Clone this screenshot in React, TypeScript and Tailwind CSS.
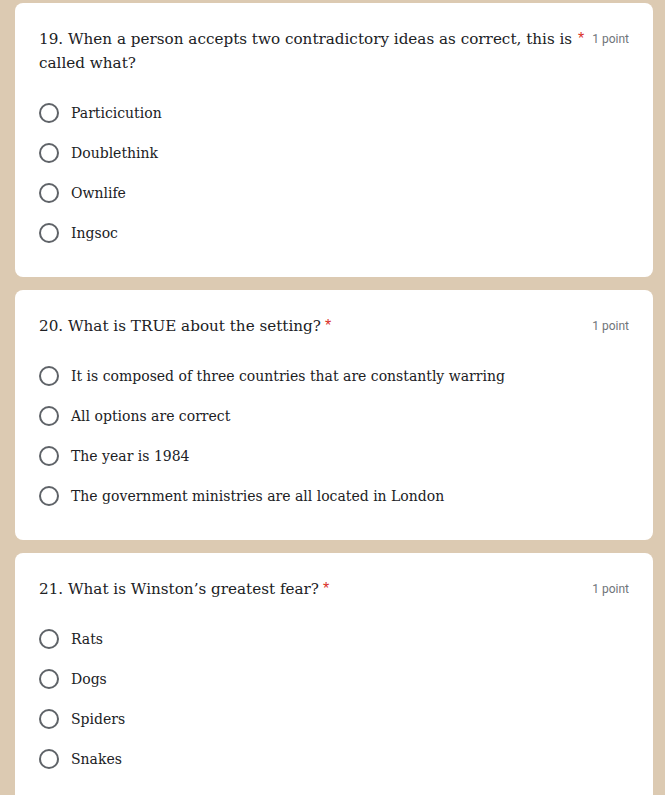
import React from 'react';

interface Question {
  title: string;
  options: string[];
}

const questions: Question[] = [
  {
    title: '19. When a person accepts two contradictory ideas as correct, this is called what?',
    options: ['Particicution', 'Doublethink', 'Ownlife', 'Ingsoc'],
  },
  {
    title: '20. What is TRUE about the setting?',
    options: [
      'It is composed of three countries that are constantly warring',
      'All options are correct',
      'The year is 1984',
      'The government ministries are all located in London',
    ],
  },
  {
    title: '21. What is Winston\u2019s greatest fear?',
    options: ['Rats', 'Dogs', 'Spiders', 'Snakes'],
  },
];

const serif = "font-['DejaVu_Serif',serif]";

const QuestionCard: React.FC<{ q: Question }> = ({ q }) => (
  <div className="bg-white rounded-lg px-6 pt-6 pb-6">
    <div className="flex items-start">
      <div className="flex items-start min-w-0">
        <span className={`${serif} text-[15.2px] leading-6 text-[#202124]`}>{q.title}</span>
        <span className="ml-1 text-[#d93025] text-[16px] leading-6 font-['Liberation_Sans',sans-serif]">*</span>
      </div>
      <span className="ml-auto pl-2 shrink-0 text-[12px] leading-6 text-[#70757a] font-['Roboto',sans-serif]">1 point</span>
    </div>
    <div className="mt-[18px] flex flex-col">
      {q.options.map((o) => (
        <label key={o} className="h-10 flex items-center">
          <span className="w-5 h-5 rounded-full border-2 border-[#5f6368] shrink-0" />
          <span className={`${serif} ml-3 text-[14px] text-[#202124]`}>{o}</span>
        </label>
      ))}
    </div>
  </div>
);

export default function App() {
  return (
    <div className="min-h-screen bg-[#dccab2] pl-[15px] pr-3 pt-[3px] pb-4 flex flex-col gap-[13px]">
      {questions.map((q) => (
        <QuestionCard key={q.title} q={q} />
      ))}
    </div>
  );
}
